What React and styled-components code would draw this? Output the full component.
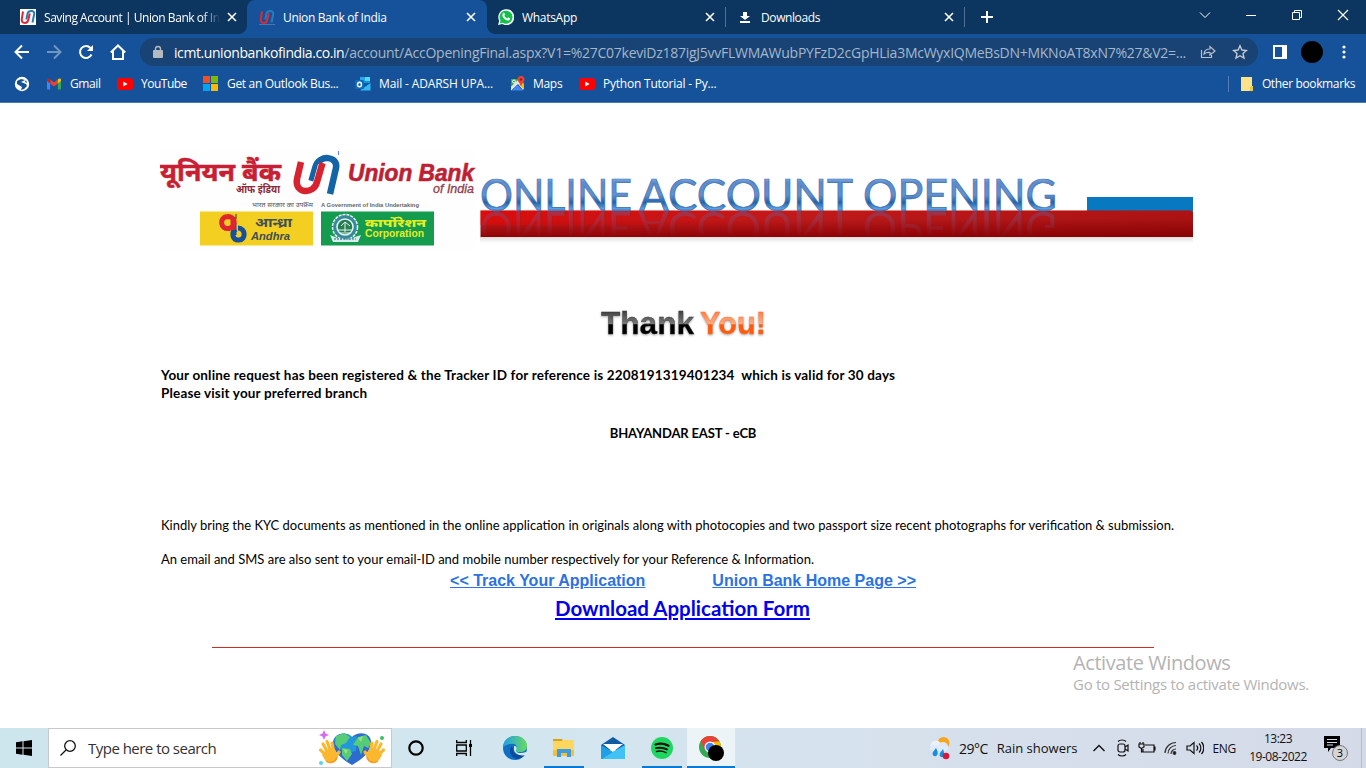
import React from "react";
import styled, { createGlobalStyle } from "styled-components";

const ui = `"Open Sans", "Noto Sans", sans-serif`;

const Global = createGlobalStyle`
  * { box-sizing: border-box; }
  body { margin: 0; background: #fff; overflow: hidden; font-family: ${ui}; }
  svg { display: block; flex: none; }
`;

const Screen = styled.div`
  width: 1366px;
  height: 768px;
  display: flex;
  flex-direction: column;
  position: relative;
`;
const Label = styled.span`
  font-size: ${(p) => p.$size || 12}px;
  letter-spacing: ${(p) => p.$ls || 0}px;
  color: ${(p) => p.$color || "inherit"};
  margin: ${(p) => p.$m || 0};
  white-space: nowrap;
`;

/* Tab strip */
const TabStrip = styled.div`
  height: 34px;
  flex: none;
  background: #0c3560;
  display: flex;
  color: #fff;
`;
const Tab = styled.div`
  width: ${(p) => p.$w}px;
  height: 34px;
  padding: 0 ${(p) => p.$pr || 9}px 0 ${(p) => p.$pl}px;
  display: flex;
  align-items: center;
  gap: 8px;
  position: relative;
  background: ${(p) => (p.$active ? "#15529a" : "transparent")};
  border-radius: 8px 8px 0 0;
  &::before, &::after {
    content: "";
    display: ${(p) => (p.$active ? "block" : "none")};
    position: absolute;
    bottom: 0;
    width: 8px;
    height: 8px;
  }
  &::before { left: -8px; background: radial-gradient(circle at 0 0, transparent 7.5px, #15529a 8px); }
  &::after { right: -8px; background: radial-gradient(circle at 100% 0, transparent 7.5px, #15529a 8px); }
`;
const TabTitle = styled.div`
  flex: 1;
  overflow: hidden;
  white-space: nowrap;
  font-size: 12px;
  letter-spacing: ${(p) => p.$ls || -0.3}px;
  ${(p) => p.$fade && "margin-right: -3px; mask-image: linear-gradient(90deg, #000 90%, transparent 100%);"}
`;
const Rule = styled.div`
  width: 1px;
  height: ${(p) => p.$h}px;
  background: ${(p) => p.$c};
  margin: ${(p) => p.$m || 0};
  flex: none;
`;
const NewTab = styled.div`
  width: 44px;
  height: 34px;
  display: grid;
  place-items: center;
`;
const WindowControls = styled.div`
  margin-left: auto;
  display: flex;
  height: 29px;
`;
const WindowButton = styled.div`
  width: 46px;
  display: grid;
  place-items: center;
`;

/* Toolbar */
const Toolbar = styled.div`
  height: 36px;
  flex: none;
  background: #15529a;
  display: flex;
  align-items: center;
  padding: 0 5px 0 6px;
`;
const ToolButton = styled.div`
  width: 32px;
  height: 32px;
  display: grid;
  place-items: center;
  flex: none;
`;
const Omnibox = styled.div`
  width: 1118px;
  height: 28px;
  border-radius: 14px;
  background: #184374;
  margin: 0 6px;
  display: flex;
  align-items: center;
  padding: 0 2px 0 12px;
  color: #a5b7cb;
`;
const Url = styled.div`
  flex: 1;
  min-width: 0;
  padding-left: 10px;
  font-size: 14px;
  letter-spacing: -0.26px;
  white-space: nowrap;
  b { font-weight: 400; color: #fff; letter-spacing: -0.42px; }
`;
const Bookmarks = styled.div`
  height: 33px;
  flex: none;
  background: #15529a;
  border-bottom: 1px solid #4579b8;
  display: flex;
  align-items: center;
  padding: 0 11px 5px 14px;
  color: #fff;
`;
const Bookmark = styled.div`
  width: ${(p) => p.$w}px;
  display: flex;
  align-items: center;
  gap: 8px;
`;
const OtherBookmarks = styled.div`
  margin-left: auto;
  display: flex;
  align-items: center;
  gap: 9px;
`;

/* Page */
const Page = styled.main`
  flex: 1;
  padding: 47px 161px 0 160px;
  color: #000;
  font-family: Lato, "Open Sans", sans-serif;
`;
const Banner = styled.header`
  display: flex;
  height: 102px;
`;
const Heading = styled.div`
  margin: 56px 0 0 436px;
`;
const Confirm = styled.p`
  margin: 26px 0 0 1px;
  font-weight: 700;
  font-size: 13.5px;
  line-height: 18px;
  white-space: pre;
  letter-spacing: ${(p) => p.$ls}px;
`;
const Branch = styled.p`
  margin: 22px 0 0 1px;
  text-align: center;
  font-weight: 700;
  font-size: 13px;
  line-height: 18px;
  letter-spacing: -0.15px;
`;
const Note = styled.p`
  margin: ${(p) => p.$top}px 0 0 1px;
  font-size: ${(p) => p.$size}px;
  line-height: 18px;
  white-space: nowrap;
`;
const LinkRow = styled.div`
  display: flex;
  justify-content: center;
  gap: 67px;
  margin: 3px 0 0 1px;
`;
const NavLink = styled.a`
  font: 700 16px/20px "Liberation Sans", Arial, sans-serif;
  color: #2a72e5;
  text-decoration: underline;
`;
const Download = styled.a`
  display: block;
  width: max-content;
  margin: 4px auto 0;
  font-size: 20.5px;
  line-height: 26px;
  font-weight: 700;
  color: #0000ee;
  text-decoration: underline;
`;
const Divider = styled.div`
  margin: 26px 51px 0 52px;
  height: 1px;
  background: #d42a20;
`;
const Watermark = styled.div`
  position: absolute;
  left: 1073px;
  top: 650px;
  color: #b3b3b3;
  display: flex;
  flex-direction: column;
`;
const WatermarkLine = styled.div`
  font-size: ${(p) => p.$size}px;
  line-height: ${(p) => p.$lh}px;
  letter-spacing: ${(p) => p.$ls}px;
  white-space: nowrap;
`;

/* Taskbar */
const Taskbar = styled.footer`
  height: 40px;
  flex: none;
  display: flex;
  background: linear-gradient(90deg, #cde5ed 0%, #d3e6ef 40%, #d6e1ec 65%, #d5dae8 100%);
  color: #111;
`;
const Start = styled.div`
  width: 48px;
  display: grid;
  place-items: center;
`;
const Search = styled.div`
  width: 344px;
  border: 1px solid #c6c8c9;
  background: #fff;
  display: flex;
  align-items: center;
  padding: 0 5px 0 11px;
  gap: 12px;
`;
const Grow = styled.div`
  flex: 1;
`;
const TaskButton = styled.div`
  width: ${(p) => p.$w}px;
  display: grid;
  place-items: center;
  background: ${(p) => (p.$on ? "#edf4f8" : "transparent")};
  box-shadow: ${(p) => (p.$line ? "inset 0 -2px #0a78d6" : "none")};
  margin: 0 ${(p) => p.$m || 0}px;
`;
const Tray = styled.div`
  margin-left: auto;
  display: flex;
  align-items: center;
`;
const TraySlot = styled.div`
  width: 24px;
  display: grid;
  place-items: center;
`;
const Clock = styled.div`
  width: 74px;
  margin-left: 5px;
  text-align: center;
  line-height: 18px;
  padding-bottom: 1px;
  display: flex;
  flex-direction: column;
`;
const ActionCenter = styled.div`
  width: 46px;
  padding: 0 0 0 8px;
`;

const CloseX = () => (
  <svg width="14" height="14" viewBox="0 0 14 14" stroke="#fff" strokeWidth="1.6"><path d="M3 3l8 8M11 3l-8 8" /></svg>
);
const BankIcon = ({ boxed }) => (
  <svg width="16" height="16" viewBox="0 0 16 16" fill="none" strokeWidth="2">
    {boxed && <path fill="#fff" d="M0 0h16v16H0z" />}
    <path stroke="#287bbd" d="M6.300 10.500L7.600 4.500C8.500 1 15 1 14.200 5L12.500 13.500" />
    <path stroke="#e32633" d="M3 2.500L1.800 10C1 15 7.300 15 8.300 11L9.800 4.500" />
    {!boxed && <path stroke="#4976ad" strokeWidth="1" d="M0 15.500h16" />}
  </svg>
);
const WhatsApp = () => (
  <svg width="16" height="16" viewBox="0 0 16 16">
    <path fill="#fff" d="M0 16l1.200-4.200A8 8 0 1 1 4.200 15z" />
    <path fill="#12c14a" d="M1.700 14.400l.8-2.800a6.500 6.500 0 1 1 2.100 2.100z" />
    <path fill="#fff" d="M5.200 4c.5-.4 1-.3 1.200.2l.6 1.400c.1.4-.5.8-.7 1.200.7 1.300 1.600 2.100 2.900 2.700.5-.3.8-1.100 1.300-.9l1.400.7c.5.3 0 1.600-.6 2-1.300.8-3.400 0-5-1.500C4.500 8 3.500 5.500 5.200 4z" />
  </svg>
);
const YouTube = () => (
  <svg width="16" height="12" viewBox="0 0 16 12"><rect width="16" height="12" rx="3" fill="#f00" /><path d="M6.300 3.500v5L10.600 6z" fill="#fff" /></svg>
);
const Gmail = () => (
  <svg width="16" height="14" viewBox="0 0 16 14">
    <path fill="#4285f4" d="M1 3v8.500a1 1 0 0 0 1 1h2.200V6z" />
    <path fill="#34a853" d="M11.800 6v6.500H14a1 1 0 0 0 1-1V3z" />
    <path fill="#ea4335" d="M4.200 2.500L8 5.400l3.800-2.900v4L8 9.400 4.200 6.500z" />
    <path fill="#c5221f" d="M1 3c0-1.700 1.500-1.700 2.500-1l.7.500v4L1 4z" />
    <path fill="#fbbc04" d="M15 3c0-1.700-1.500-1.700-2.500-1l-.7.500v4L15 4z" />
  </svg>
);
const Outlook = () => (
  <svg width="16" height="16" viewBox="0 0 16 16">
    <path fill="#1490df" d="M5 1h10v8H5z" /><path fill="#50d9ff" d="M10 1h5v4h-5z" /><path fill="#28a8ea" d="M5 1h5v4H5z" />
    <path fill="#0a5ba5" d="M5 7h10v7H5z" /><path fill="#35b8f1" d="M15.500 7v7.500H5z" />
    <rect y="4" width="9" height="9" rx="1" fill="#0f6cbd" /><ellipse cx="4.500" cy="8.500" rx="2" ry="2.300" fill="none" stroke="#fff" strokeWidth="1.400" />
  </svg>
);
const Maps = () => (
  <svg width="15" height="16" viewBox="0 0 15 16">
    <path fill="#34a853" d="M1 3h8L1 12z" /><path fill="#f1f1f1" d="M9.500 3H13v11L8 8 1 14.500V11z" /><path fill="#fbbc04" d="M13 6l1 2v6L9 8.500z" />
    <path fill="#4285f4" d="M7 8.500l6 6H2z" /><path fill="#e5e5e5" d="M1 11l7-7 1.500 1.500L1 14.500z" />
    <circle cx="4" cy="5.500" r="1.500" fill="none" stroke="#fff" />
    <path fill="#ea4335" d="M11 0a3.600 3.600 0 0 1 3.500 3.600C14.500 6 12 7 11 10.500 10 7 7.500 6 7.500 3.600A3.600 3.600 0 0 1 11 0z" /><circle cx="11" cy="3.500" r="1.200" fill="#8e211a" />
  </svg>
);

const Hand = ({ flip }) => (
  <g transform={flip ? "translate(68 0) scale(-1 1)" : undefined}>
    <g stroke="#fbb82e" strokeWidth="3.200" strokeLinecap="round" fill="none">
      <path d="M9 26L2.500 20M10 23L5 14M13 22L9 11.500M16 23L14 13" />
      <path d="M17 28l4-6" />
    </g>
    <path fill="#fbb82e" d="M6 22c4-4 9-5 12-1l1 7c-1 5-8 7-12 2L4 25z" />
    <path d="M8 31c4 3 10 1 11-4" stroke="#f39c27" fill="none" strokeWidth="1.500" />
  </g>
);
const SearchArt = () => (
  <svg width="68" height="37" viewBox="0 0 68 37">
    <path fill="#2e6bd0" d="M34 35C25 30 15 22 15 13 15 4 27 0 34 7 41 0 54 3 53 13 52 23 43 30 34 35z" />
    <path fill="#2396de" d="M34 7C26 0 17 5 16 11l11 13 11-3 1-15z" />
    <path fill="#56cc78" d="M18 6l8-3 6 4-4 6-5 2-1 5-5-6zM24 18l8 1 2 5-5 7-5-6zM40 7l8-2 5 8-3 5-4-2-3 9-3-9-5-1z" />
    <path fill="#9be079" d="M40 8l5-2-2 6zM25 19l5 1-2 4z" />
    <Hand /><Hand flip />
    <path fill="#d56cf3" d="M6 0l1.500 3.500L11 5 7.500 6.500 6 10 4.500 6.500 1 5l3.500-1.500z" /><circle cx="3" cy="33" r="2" fill="#57d7df" /><circle cx="64" cy="8" r="2" fill="#3cbe68" />
  </svg>
);

const BankLogo = () => (
  <svg width="320" height="102" viewBox="160 150 320 102" fontFamily='"Noto Sans", "Open Sans", sans-serif'>
    <rect x="160" y="150" width="318" height="100" fill="#fefefe" />
    <text x="160" y="181" fontSize="26" fontWeight="700" fill="#c81f34" stroke="#c81f34" strokeWidth=".5" textLength="121" lengthAdjust="spacingAndGlyphs">यूनियन बैंक</text>
    <text x="236" y="193" fontSize="11" fontWeight="700" fontStyle="italic" fill="#8e2b39" textLength="44" lengthAdjust="spacingAndGlyphs">ऑफ इंडिया</text>
    <g fill="none" strokeWidth="6.500">
      <path stroke="#1363a7" d="M311.500 181l4-14c3.500-13 23-11 20.500 1l-6 26" />
      <path stroke="#fff" strokeWidth="8" d="M317 183l5-18" />
      <path stroke="#d7232f" d="M301 162l-4 17c-3 15 17 16 20 3l5.500-19" />
    </g>
    <path d="M338.500 151v4" stroke="#5588e8" />
    <g fontFamily='"Liberation Sans", Arial, sans-serif' fontStyle="italic">
      <text x="348" y="180.500" fontSize="23" fontWeight="700" fill="#bf1f34" stroke="#bf1f34" strokeWidth=".6" textLength="126" lengthAdjust="spacingAndGlyphs">Union Bank</text>
      <text x="433" y="192.500" fontSize="12" fill="#90404d" stroke="#90404d" strokeWidth=".3" textLength="41" lengthAdjust="spacingAndGlyphs">of India</text>
      <text x="321" y="207" fontSize="6" fontWeight="700" fontStyle="normal" fill="#666" textLength="98" lengthAdjust="spacingAndGlyphs">A Government of India Undertaking</text>
    </g>
    <text x="252" y="207" fontSize="6.500" fill="#555" textLength="61" lengthAdjust="spacingAndGlyphs">भारत सरकार का उपक्रम</text>
    <path fill="#f2cf20" d="M200 211.500h113v34H200z" />
    <g fill="none" strokeWidth="5">
      <path stroke="#174f9b" d="M234 223v12M238 228c8 0 8 12 1 12-7 1-8-8-3-11" />
      <path stroke="#df2530" d="M233 217v13M227 216.500c-8 1-7 13 2 12 4-1 6-5 5-8-1-3-4-4-7-4" />
    </g>
    <path d="M236 214v5" stroke="#333" />
    <text x="255" y="227" fontSize="13" fontWeight="700" fontStyle="italic" fill="#41505a" textLength="37" lengthAdjust="spacingAndGlyphs">आन्ध्रा</text>
    <text x="251" y="240" fontSize="11.500" fontWeight="700" fontStyle="italic" fill="#3e4d56" textLength="39" lengthAdjust="spacingAndGlyphs" fontFamily="Liberation Sans">Andhra</text>
    <path fill="#159b4e" d="M321 211.500h113v34H321z" />
    <g stroke="#e7f3f5" fill="none">
      <circle cx="345" cy="227" r="12.500" fill="#368998" strokeWidth="1.500" strokeDasharray="3 1" />
      <circle cx="345" cy="227" r="8" fill="#248050" strokeWidth="1.500" />
      <path d="M338 230h14M340 233h10M341 226l4-4 5 4M345 222v10" />
    </g>
    <path fill="#d9edf1" d="M330 235l5 2c7 4 14 4 20 0l6-2-3 7H333z" /><path stroke="#246b8c" strokeDasharray="2 1" d="M334 239h22" />
    <text x="365" y="227" fontSize="11" fontWeight="800" fill="#e3ee25" textLength="61" lengthAdjust="spacingAndGlyphs">कार्पोरेशन</text>
    <text x="365" y="237" fontSize="10" fontWeight="700" fill="#e3ee25" textLength="59" lengthAdjust="spacingAndGlyphs" fontFamily="Liberation Sans">Corporation</text>
  </svg>
);

const titleWords = [["ONLINE", 480, 152], ["ACCOUNT", 639, 214], ["OPENING", 863, 194]];
const TitleArt = () => (
  <svg width="718" height="102" viewBox="480 150 718 102">
    <defs>
      <linearGradient id="letters" gradientUnits="userSpaceOnUse" x1="0" x2="0" y1="178" y2="212">
        <stop offset="0" stopColor="#85b9ed" /><stop offset=".12" stopColor="#5e8bcc" /><stop offset=".5" stopColor="#6290cd" /><stop offset=".72" stopColor="#2363a8" /><stop offset=".9" stopColor="#5c9ee0" /><stop offset="1" stopColor="#2f68ac" />
      </linearGradient>
      <linearGradient id="ribbon" x1="0" x2=".06" y1="0" y2="1">
        <stop offset="0" stopColor="#c91818" /><stop offset=".35" stopColor="#bd1b1c" /><stop offset="1" stopColor="#900306" />
      </linearGradient>
      <linearGradient id="glow"><stop offset="0" stopColor="#f00000" stopOpacity=".75" /><stop offset=".45" stopColor="#d00" stopOpacity="0" /></linearGradient>
      <linearGradient id="shade"><stop offset=".4" stopColor="#7a0000" stopOpacity="0" /><stop offset="1" stopColor="#7a0000" stopOpacity=".3" /></linearGradient>
      <linearGradient id="under" x2="0" y2="1"><stop offset="0" stopColor="#ddd" /><stop offset="1" stopColor="#fff" /></linearGradient>
      <linearGradient id="reflect" gradientUnits="userSpaceOnUse" x1="0" x2="0" y1="211" y2="186"><stop offset="0" stopColor="#7b5080" stopOpacity=".5" /><stop offset="1" stopColor="#7b5080" stopOpacity="0" /></linearGradient>
      <clipPath id="band"><path d="M480 211h713v26H480z" /></clipPath>
    </defs>
    <path fill="#0878c0" d="M1087 197h106v16h-106z" />
    <path fill="url(#under)" d="M480 237h713v6H480z" />
    <path fill="url(#ribbon)" d="M480.500 210.500H1191l2 2V237H480.500z" />
    <path fill="url(#glow)" d="M480.500 210.500H1193V225H480.500z" opacity=".7" />
    <path fill="url(#shade)" d="M480.500 210.500H1191l2 2V237H480.500z" />
    <g clipPath="url(#band)"><use href="#title" transform="translate(0 422.500) scale(1 -1)" fill="url(#reflect)" /></g>
    <g fill="url(#letters)" stroke="#3c70b4" strokeWidth=".7">
      <g id="title" fontSize="44" fontFamily="Lato">
        {titleWords.map(([word, x, w]) => (
          <text key={word} x={x} y="210.500" textLength={w} lengthAdjust="spacingAndGlyphs">{word}</text>
        ))}
      </g>
    </g>
  </svg>
);

const ThankArt = styled.svg`
  filter: drop-shadow(0 1px 1px rgba(0, 0, 0, 0.35));
`;
const ThankYou = () => (
  <ThankArt width="174" height="32" viewBox="596 308 174 32" fontFamily="Liberation Sans" fontSize="31" fontWeight="700" strokeLinejoin="round">
    <defs>
      <linearGradient id="dark" gradientUnits="userSpaceOnUse" x1="0" x2="0" y1="312" y2="335"><stop offset="0" stopColor="#444" /><stop offset=".5" stopColor="#777" /><stop offset=".56" stopColor="#000" /></linearGradient>
      <linearGradient id="orange" gradientUnits="userSpaceOnUse" x1="0" x2="0" y1="312" y2="335"><stop offset="0" stopColor="#ff7d42" /><stop offset=".5" stopColor="#ffac83" /><stop offset=".56" stopColor="#ff5b0d" /></linearGradient>
    </defs>
    <text x="601" y="334" textLength="93" lengthAdjust="spacingAndGlyphs" fill="url(#dark)" stroke="#333" strokeWidth=".3">Thank</text>
    <text x="700" y="334" textLength="66" lengthAdjust="spacingAndGlyphs" fill="url(#orange)" stroke="#ff7635" strokeWidth=".3">You!</text>
  </ThankArt>
);

const Edge = () => (
  <svg width="24" height="24" viewBox="0 0 24 24">
    <defs><linearGradient id="edge"><stop offset="0" stopColor="#1f9ee7" /><stop offset="1" stopColor="#67db60" /></linearGradient></defs>
    <circle cx="12" cy="12" r="12" fill="#0f6fc4" />
    <path fill="url(#edge)" d="M0 12C0 4 6 0 12 0c8 0 12 5 12 10 0 4-3 6-7 6-4 1-5-1-4-3 2-3-1-6-5-5-4 0-7 2-8 4z" />
    <path fill="#0c4b9c" d="M9 10c-4 4-2 11 5 13 5-1 7-3 9-6-7 4-13 1-13-4z" />
    <path fill="#d6e8f1" d="M11 10c3 0 3 2 2 4-1 3 5 4 10 2l2 2c-5 3-14 1-14-5z" />
  </svg>
);
const Explorer = () => (
  <svg width="22" height="20" viewBox="0 0 22 20"><path fill="#d9a014" d="M0 1h9l2 3H0z" /><path fill="#ffd75e" d="M0 3h8l2-1h11v15H0z" /><path fill="#f5bf3a" d="M0 12h21v6H0z" /><path fill="#3d9be0" d="M4 11h14v8h-4v-4H8v4H4z" /></svg>
);
const Mail = () => (
  <svg width="24" height="24" viewBox="0 0 24 24"><path fill="#0f5ba6" d="M0 9L12 1l12 8v5H0z" /><path fill="#fff" d="M2 8h20l-10 8z" /><path fill="#1f9fe4" d="M0 9l12 7 12-7v14H0z" /><path fill="#40c2f5" d="M24 9v14H1l11-7z" /></svg>
);
const Spotify = () => (
  <svg width="22" height="22" viewBox="0 0 22 22"><circle cx="11" cy="11" r="11" fill="#1ed760" /><g fill="none" stroke="#111" strokeLinecap="round"><path strokeWidth="2.300" d="M4.500 7.500c4-1.300 9-1 13 1.200" /><path strokeWidth="1.900" d="M5 11.200c4-1 7.500-.6 11 1.200" /><path strokeWidth="1.500" d="M5.500 14.500c3.500-.8 6.500-.4 9.500 1.200" /></g></svg>
);
const Chrome = () => (
  <svg width="26" height="26" viewBox="0 0 26 26"><circle cx="12" cy="12" r="11" fill="#34a853" /><path fill="#ea4335" d="M2.500 6.500A11 11 0 0 1 21.500 6.500L12 7 7 15z" /><path fill="#fbbc04" d="M21.500 6.500A11 11 0 0 1 12 23l5-9-4-7z" /><circle cx="12" cy="12" r="5.500" fill="#fff" /><circle cx="12" cy="12" r="4.300" fill="#3f83f0" /><circle cx="18" cy="18" r="8" fill="#000" /></svg>
);
const Weather = () => (
  <svg width="26" height="24" viewBox="0 0 26 24"><circle cx="15.500" cy="7" r="6" fill="#f8a51d" /><circle cx="8" cy="10" r="5.500" fill="#eaf1fa" /><circle cx="15" cy="11" r="5" fill="#dbe9fa" /><rect x="2" y="9" width="18" height="6" rx="3" fill="#dfeafa" /><path fill="#158fdc" d="M8 12c2 3 2.500 7 0 8-3 1-4-2-3-4zM15 13c1 3 2 6 0 8-3 1-4-2-3-4z" /><circle cx="18" cy="20" r="3.300" fill="#d9153b" /></svg>
);

export default function App() {
  return (
    <Screen>
      <Global />
      <TabStrip>
        <Tab $w={247} $pl={20} $pr={8}><BankIcon boxed /><TabTitle $fade $ls={-0.45}>Saving Account | Union Bank of India</TabTitle><CloseX /></Tab>
        <Tab $w={240} $pl={12} $active><BankIcon /><TabTitle $ls={-0.35}>Union Bank of India</TabTitle><CloseX /></Tab>
        <Tab $w={238} $pl={11} $pr={8}><WhatsApp /><TabTitle>WhatsApp</TabTitle><CloseX /></Tab>
        <Rule $h={20} $c="#50708f" $m="7px 0 0" />
        <Tab $w={238} $pl={11} $pr={8}><svg width="16" height="16" viewBox="0 0 16 16" fill="#fff"><path d="M6 3h4v4h3l-5 4-5-4h3zM3 12h10v2H3z" /></svg><TabTitle $ls={-0.4}>Downloads</TabTitle><CloseX /></Tab>
        <Rule $h={20} $c="#50708f" $m="7px 0 0" />
        <NewTab><svg width="14" height="14" stroke="#fff" strokeWidth="2"><path d="M7 1v12M1 7h12" /></svg></NewTab>
        <WindowControls>
          <WindowButton><svg width="12" height="12" fill="none" stroke="#fff"><path d="M1 3.500l5 5 5-5" /></svg></WindowButton>
          <WindowButton><svg width="12" height="12" stroke="#fff"><path d="M1 6.500h10" /></svg></WindowButton>
          <WindowButton><svg width="12" height="12" fill="none" stroke="#fff"><path d="M1.500 3.500h7v7h-7zM3.500 3V1.500h7v7H9" /></svg></WindowButton>
          <WindowButton><svg width="12" height="12" stroke="#fff" strokeWidth="1.200"><path d="M1 1l10 10M11 1L1 11" /></svg></WindowButton>
        </WindowControls>
      </TabStrip>

      <Toolbar>
        <ToolButton><svg width="16" height="16" fill="none" stroke="#fff" strokeWidth="2"><path d="M15 8H2M8 1.500L1.500 8 8 14.500" /></svg></ToolButton>
        <ToolButton><svg width="16" height="16" fill="none" stroke="#7196c2" strokeWidth="2"><path d="M1 8h13M8 1.500L14.500 8 8 14.500" /></svg></ToolButton>
        <ToolButton><svg width="16" height="16" fill="none" stroke="#fff" strokeWidth="2"><path d="M13.500 10.500A6 6 0 1 1 12.500 4" /><path fill="#fff" stroke="none" d="M15 1v6H9z" /></svg></ToolButton>
        <ToolButton><svg width="16" height="16" fill="none" stroke="#fff" strokeWidth="2"><path d="M.8 8.500L8 1.500l7.200 7M3 7v8h10V7" /></svg></ToolButton>
        <Omnibox>
          <svg width="12" height="14" viewBox="0 0 12 14"><path fill="#b5bac0" d="M2 5h8a1 1 0 0 1 1 1v6a1 1 0 0 1-1 1H2a1 1 0 0 1-1-1V6a1 1 0 0 1 1-1z" /><path d="M3.500 6V4a2.500 2.500 0 0 1 5 0v2" fill="none" stroke="#b5bac0" strokeWidth="1.400" /></svg>
          <Url><b>icmt.unionbankofindia.co.in</b>/account/AccOpeningFinal.aspx?V1=%27C07keviDz187igJ5vvFLWMAWubPYFzD2cGpHLia3McWyxIQMeBsDN+MKNoAT8xN7%27&amp;V2=...</Url>
          <ToolButton><svg width="16" height="16" fill="none" stroke="#b9c0c9" strokeWidth="1.200"><path d="M1.500 6v7.500h10V11M4 10c.3-3.500 2.500-5 6-5V2.500L15 7l-5 4V8.500C7.500 8.300 5.500 8.700 4 10z" /></svg></ToolButton>
          <ToolButton><svg width="16" height="16" fill="none" stroke="#c5c9ce" strokeWidth="1.400"><path d="M8 1.800l1.900 4.200 4.500.5-3.400 3 1 4.500L8 11.700 4 14l1-4.500-3.400-3L6.100 6z" /></svg></ToolButton>
        </Omnibox>
        <ToolButton><svg width="14" height="14"><path fill="#fff" d="M0 0h14v14H0z" /><path fill="#15529a" d="M2 2h7v10H2z" /></svg></ToolButton>
        <ToolButton><svg width="22" height="22"><circle cx="11" cy="11" r="11" /></svg></ToolButton>
        <ToolButton><svg width="4" height="16" fill="#fff"><circle cx="2" cy="3" r="1.600" /><circle cx="2" cy="8" r="1.600" /><circle cx="2" cy="13" r="1.600" /></svg></ToolButton>
      </Toolbar>

      <Bookmarks>
        <Bookmark $w={32}><svg width="16" height="16"><circle cx="8" cy="8" r="7.200" fill="#fff" /><path fill="#15529a" d="M3 5l4-2 4 1-4 2 5 2 1 2-3 3-3 1 1-3-5-3zM12 4l1 3-2-1z" /></svg></Bookmark>
        <Bookmark $w={71}><Gmail /><Label $ls={-0.4}>Gmail</Label></Bookmark>
        <Bookmark $w={86}><YouTube /><Label $ls={-0.5}>YouTube</Label></Bookmark>
        <Bookmark $w={152}><svg width="16" height="16"><path fill="#f25022" d="M0 0h7v7H0z" /><path fill="#7fba00" d="M8 0h7v7H8z" /><path fill="#00a4ef" d="M0 8h7v7H0z" /><path fill="#ffb900" d="M8 8h7v7H8z" /></svg><Label $ls={-0.32}>Get an Outlook Bus...</Label></Bookmark>
        <Bookmark $w={155}><Outlook /><Label $ls={-0.12}>Mail - ADARSH UPA...</Label></Bookmark>
        <Bookmark $w={69}><Maps /><Label $ls={-0.3}>Maps</Label></Bookmark>
        <Bookmark $w={160}><YouTube /><Label $ls={-0.22}>Python Tutorial - Py...</Label></Bookmark>
        <OtherBookmarks><Rule $h={16} $c="#547fb4" $m="0 3px 0 0" /><svg width="12" height="14"><path fill="#ffe28a" d="M0 0h11v10l-2 1v3H0z" /><path fill="#f1c944" d="M10 9h2v5H9v-3z" /></svg><Label $ls={-0.36}>Other bookmarks</Label></OtherBookmarks>
      </Bookmarks>

      <Page>
        <Banner><BankLogo /><TitleArt /></Banner>
        <Heading><ThankYou /></Heading>
        <Confirm $ls={0.16}>{"Your online request has been registered & the Tracker ID for reference is 2208191319401234  which is valid for 30 days\nPlease visit your preferred branch"}</Confirm>
        <Branch>BHAYANDAR EAST - eCB</Branch>
        <Note $top={74} $size={12.97}>Kindly bring the KYC documents as mentioned in the online application in originals along with photocopies and two passport size recent photographs for verification &amp; submission.</Note>
        <Note $top={16} $size={13.01}>An email and SMS are also sent to your email-ID and mobile number respectively for your Reference &amp; Information.</Note>
        <LinkRow><NavLink>&lt;&lt; Track Your Application</NavLink><NavLink>Union Bank Home Page &gt;&gt;</NavLink></LinkRow>
        <Download>Download Application Form</Download>
        <Divider />
      </Page>

      <Taskbar>
        <Start><svg width="16" height="16"><path d="M0 2.200L6.500 1.300V7.500H0zM7.500 1.200L16 0v7.500H7.500zM0 8.500h6.500v6.200L0 13.800zM7.500 8.500H16V16l-8.500-1.200z" /></svg></Start>
        <Search>
          <svg width="16" height="16" fill="none" stroke="#111" strokeWidth="1.300"><circle cx="10" cy="6" r="5.300" /><path d="M6 10l-5.500 5.500" /></svg>
          <Label $size={15} $ls={-0.52} $color="#333">Type here to search</Label>
          <Grow />
          <SearchArt />
        </Search>
        <TaskButton $w={48}><svg width="16" height="16" fill="none" stroke="#000" strokeWidth="2.200"><circle cx="8" cy="8" r="6.700" /></svg></TaskButton>
        <TaskButton $w={48}><svg width="16" height="16" fill="none" stroke="#000" strokeWidth="1.300"><path d="M.7 0v2.500h9.600V0M.7 16v-2.500h9.600V16M.7 5h9.600v6H.7zM14.500 0v16" /><path fill="#000" stroke="none" d="M13 4h3v3h-3z" /></svg></TaskButton>
        <TaskButton $w={50} $m={2}><Edge /></TaskButton>
        <TaskButton $w={40} $m={2} $line><Explorer /></TaskButton>
        <TaskButton $w={53}><Mail /></TaskButton>
        <TaskButton $w={40} $m={3} $line><Spotify /></TaskButton>
        <TaskButton $w={48} $m={2} $on $line><Chrome /></TaskButton>
        <Tray>
          <Weather />
          <Label $size={14} $ls={-0.5} $m="0 9px 0 5px">29°C</Label>
          <Label $size={13} $ls={0} $m="0 10px 0 0">Rain showers</Label>
          <TraySlot><svg width="14" height="14" fill="none" stroke="#111" strokeWidth="1.400"><path d="M1.500 10L7 4.500l5.500 5.500" /></svg></TraySlot>
          <TraySlot><svg width="14" height="18" fill="none" stroke="#111" strokeWidth="1.200"><rect x="2" y="5" width="7" height="8" rx="2" /><path d="M9 8l3-2v6l-3-2M2 2.500c2-2 6-2 8 0M2 15.500c2 2 6 2 8 0" /></svg></TraySlot>
          <TraySlot><svg width="18" height="14" fill="none" stroke="#111" strokeWidth="1.200"><path d="M7 4h9v7H5V8M16 6h1v3h-1M2 1v2M5 1v2M1 3h5v3l-2.500 1.500L1 6zM3.500 7v4H6" /></svg></TraySlot>
          <TraySlot><svg width="16" height="16" fill="none" stroke="#333" strokeWidth="1.200"><path d="M2 13A11 11 0 0 1 13 2.500M5 13.500a8 8 0 0 1 8-8M8 14a5 5 0 0 1 5-5" /><circle cx="11.500" cy="13" r="1.300" fill="#111" /></svg></TraySlot>
          <TraySlot><svg width="18" height="16" fill="none" stroke="#111" strokeWidth="1.200"><path d="M1 6h3l4-3.500v11L4 10H1zM10.500 5.500c1.500 1.500 1.500 3.500 0 5M13 3.500c2.500 2.500 2.500 6.500 0 9M15.500 2c3 3.500 3 8.500 0 12" /></svg></TraySlot>
          <Label $size={12} $ls={-0.3} $m="0 0 0 5px">ENG</Label>
          <Clock><Label $size={12} $ls={-0.5}>13:23</Label><Label $size={12} $ls={-0.5}>19-08-2022</Label></Clock>
          <ActionCenter>
            <svg width="28" height="30" viewBox="0 0 28 30"><path d="M1 3h16v12H8l-3 4v-4H1z" /><path d="M4 6.500h10M4 9.500h10M4 12h6" stroke="#d6dbe8" /><circle cx="17" cy="20" r="7.500" fill="#d5d5d7" stroke="#777" /><text x="17" y="24" fontSize="11" textAnchor="middle" fontFamily="Open Sans">3</text></svg>
          </ActionCenter>
          <Rule $h={40} $c="#b4bac6" $m="0 4px 0 0" />
        </Tray>
      </Taskbar>

      <Watermark>
        <WatermarkLine $size={20} $lh={25} $ls={-0.42}>Activate Windows</WatermarkLine>
        <WatermarkLine $size={15} $lh={19} $ls={-0.28}>Go to Settings to activate Windows.</WatermarkLine>
      </Watermark>
    </Screen>
  );
}
